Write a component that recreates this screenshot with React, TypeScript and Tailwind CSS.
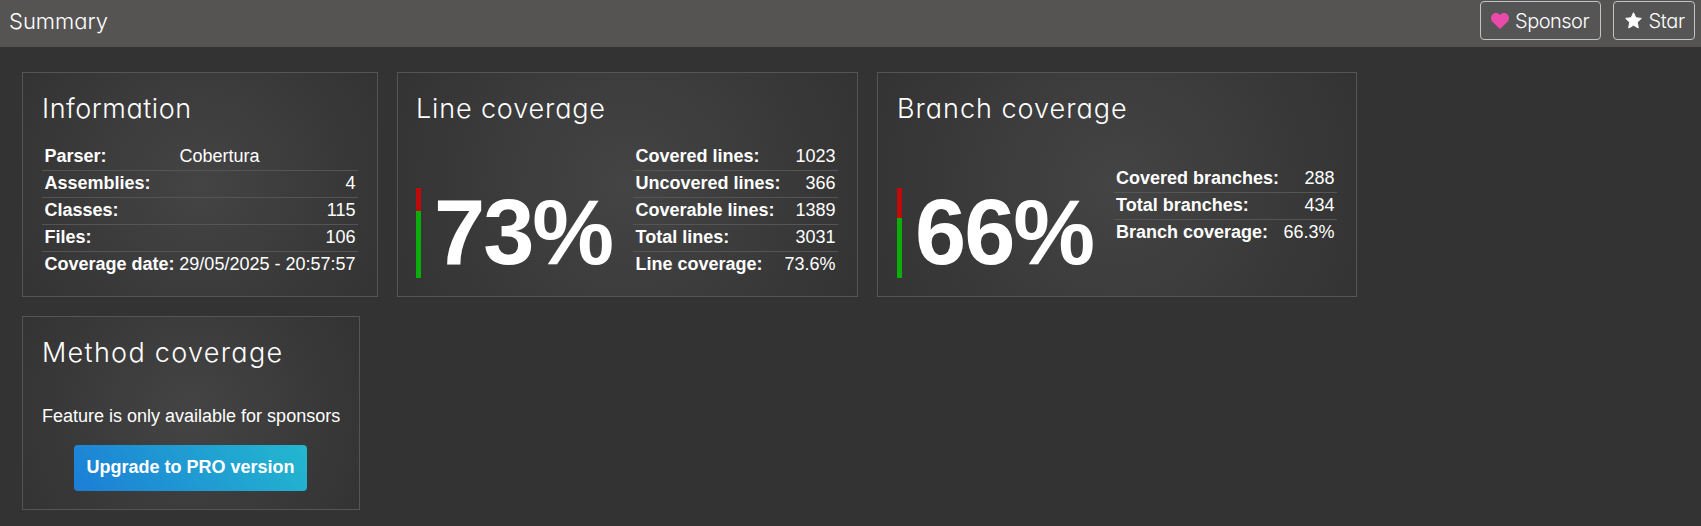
import React from 'react';

const display = "font-['Inter',sans-serif] font-light [font-feature-settings:'cv11'_1]";

type Row = [string, string];

function Heart() {
  return (
    <svg viewBox="0 0 18 16" className="mr-[6px] h-4 w-[18px] shrink-0 fill-[#ea4aaa]">
      <path d="M9 16 1.6 8.9C-.5 6.8-.5 3.4 1.6 1.4 3.6-.5 7-.4 9 1.9 11-.4 14.4-.5 16.4 1.4c2.1 2 2.1 5.4 0 7.5Z" />
    </svg>
  );
}

function Star() {
  return (
    <svg viewBox="0 0 17 17" className="mr-[7px] mb-px size-[17px] shrink-0 fill-white stroke-white">
      <path strokeWidth="1" strokeLinejoin="round" d="m8.5.7 2.3 5 5.5.7-4 3.8 1 5.8-4.8-2.8L3.700 16l1-5.800-4-3.800 5.500-.7Z" />
    </svg>
  );
}

function Card({ title, tracking, className, children }: { title: string; tracking: string; className: string; children: React.ReactNode }) {
  return (
    <section className={`border border-[#555] bg-[radial-gradient(circle,#444,#333)] pt-[19px] pr-[19px] ${className}`}>
      <h2 className={`${display} ${tracking} whitespace-nowrap text-[27px] leading-[34px]`}>{title}</h2>
      {children}
    </section>
  );
}

function Stats({ rows, className }: { rows: Row[]; className: string }) {
  return (
    <dl className={className}>
      {rows.map(([label, value]) => (
        <div key={label} className="flex h-[27px] justify-between border-b border-[#555] px-[2.5px] leading-[24px] whitespace-nowrap last:border-b-0">
          <dt className="font-bold">{label}</dt>
          <dd className={value === 'Cobertura' ? 'w-[176px]' : ''}>{value}</dd>
        </div>
      ))}
    </dl>
  );
}

function Percentage({ value, red }: { value: string; red: string }) {
  return (
    <div className="flex h-[90px]">
      <div className="flex w-[5px] flex-col bg-[#0aad0a]">
        <div className={`bg-[#c00a0a] ${red}`} />
      </div>
      <div className="ml-[13px] w-[180px] text-[92px] leading-[88px] font-bold tracking-[-2px]">{value}</div>
    </div>
  );
}

export default function App() {
  return (
    <div className="h-[526px] overflow-hidden bg-[#333] font-['Liberation_Sans',Arial,sans-serif] text-[18px] text-white">
      <header className={`flex h-[47px] items-start justify-between bg-[#555453] pr-[6px] pl-[9px] ${display}`}>
        <h1 className="text-[22px] leading-[43px]">Summary</h1>
        <div className="flex gap-3 pt-px text-[20px] leading-[37px]">
          <a className="flex h-[39px] w-[121px] items-center rounded-[4px] border border-[#c3c3c3] bg-[#555] pl-[10px] tracking-[-0.5px]">
            <Heart />
            <span className="pt-px">Sponsor</span>
          </a>
          <a className="flex h-[39px] w-[82px] items-center rounded-[4px] border border-[#c3c3c3] bg-[#555] pl-[10.5px] tracking-[-0.3px]">
            <Star />
            <span className="pt-px">Star</span>
          </a>
        </div>
      </header>
      <main className="flex flex-wrap gap-[19px] pt-[25px] pl-[22px]">
        <Card title="Information" tracking="tracking-[0.55px]" className="h-[225px] w-[356px] pl-[19px]">
          <Stats
            className="mt-[18px] w-[316px]"
            rows={[['Parser:', 'Cobertura'], ['Assemblies:', '4'], ['Classes:', '115'], ['Files:', '106'], ['Coverage date:', '29/05/2025 - 20:57:57']]}
          />
        </Card>
        <Card title="Line coverage" tracking="tracking-[0.85px]" className="h-[225px] w-[461px] pl-[18px]">
          <div className="mt-[18px] flex">
            <div className="pt-[44px]"><Percentage value="73%" red="h-[23px]" /></div>
            <Stats
              className="ml-[19px] w-[207px]"
              rows={[['Covered lines:', '1023'], ['Uncovered lines:', '366'], ['Coverable lines:', '1389'], ['Total lines:', '3031'], ['Line coverage:', '73.6%']]}
            />
          </div>
        </Card>
        <Card title="Branch coverage" tracking="tracking-[1px]" className="h-[225px] w-[480px] pl-[19px]">
          <div className="mt-[18px] flex">
            <div className="pt-[44px]"><Percentage value="66%" red="h-[30px]" /></div>
            <Stats
              className="mt-[22px] ml-[18.5px] w-[224.5px]"
              rows={[['Covered branches:', '288'], ['Total branches:', '434'], ['Branch coverage:', '66.3%']]}
            />
          </div>
        </Card>
        <div className="basis-full">
          <Card title="Method coverage" tracking="tracking-[1.3px]" className="h-[194px] w-[338px] pl-[19px]">
            <p className="mt-[34px] leading-[24px] whitespace-nowrap">Feature is only available for sponsors</p>
            <a className="mt-[17px] ml-[32px] block h-[46px] w-[233px] rounded-[4px] bg-[linear-gradient(50deg,#1c7ed6,#23b8cf)] text-center leading-[44px] font-bold">
              Upgrade to PRO version
            </a>
          </Card>
        </div>
      </main>
    </div>
  );
}
